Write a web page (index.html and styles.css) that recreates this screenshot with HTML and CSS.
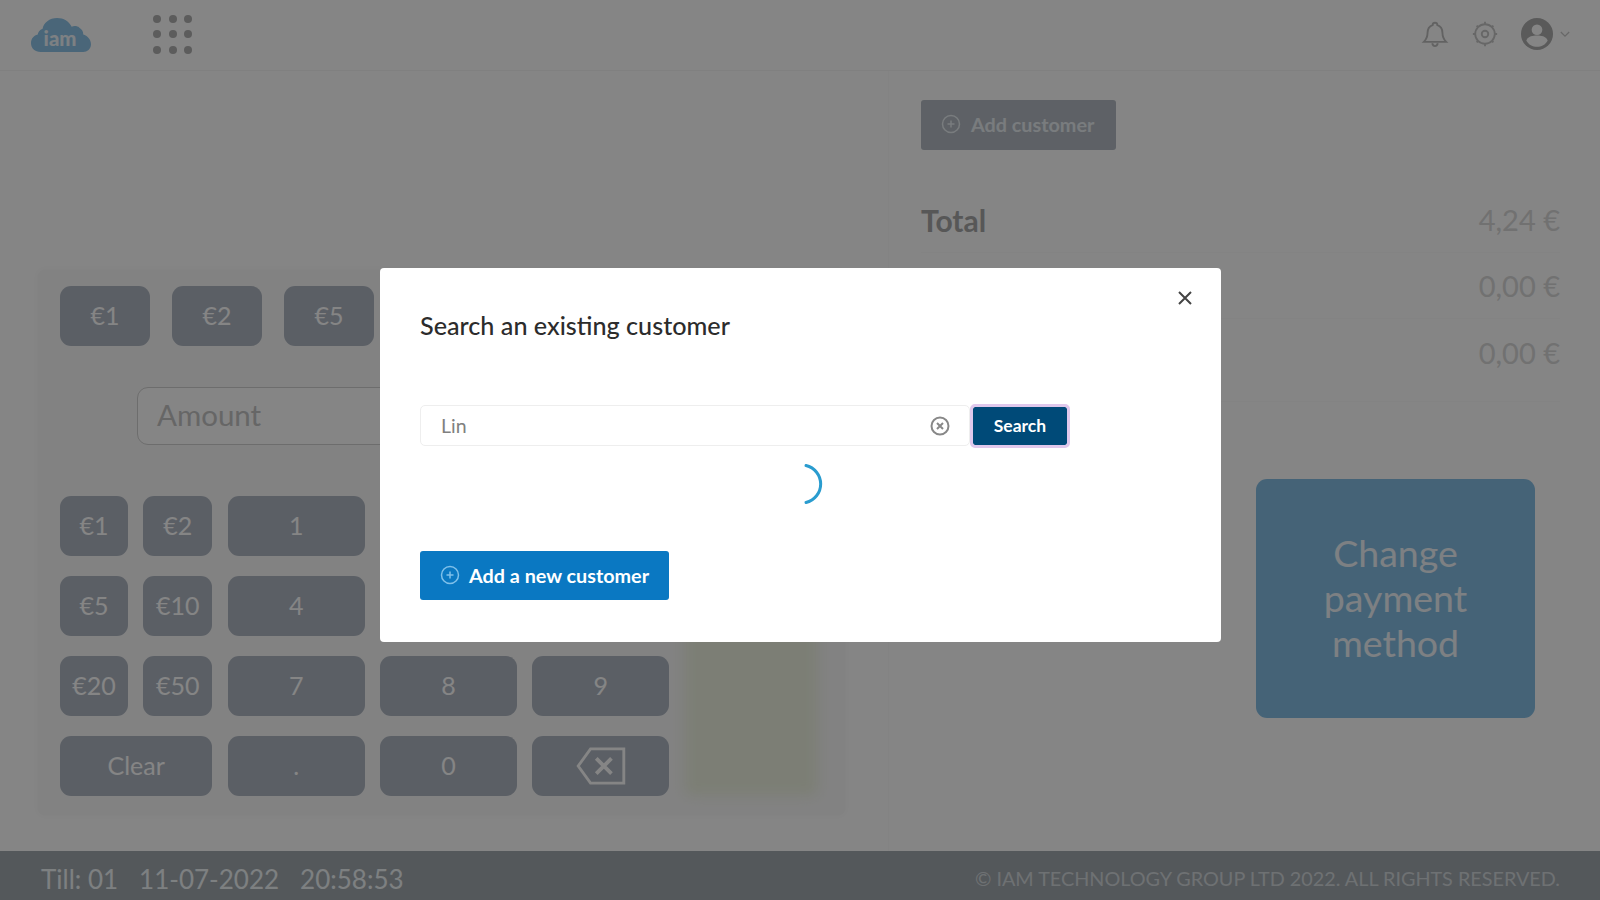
FILE: index.html
```html
<!DOCTYPE html>
<html lang="en">
<head>
  <meta charset="UTF-8">
  <title>IAM Till</title>
  <link rel="stylesheet" href="styles.css">
</head>
<body>
  <header class="topbar">
    <div class="topbar-left">
      <svg class="logo" viewBox="0 0 62 38">
        <path d="M10 37C4 37 0 33 0 28c0-5 3-8 7-9 0-2 2-5 5-6 1-6 7-11 15-11 7 0 12 3 15 9 2-1 6-1 8 1 3 2 4 4 4 7 4 1 8 5 8 10 0 5-4 8-8 8z" fill="#8ec4e8"/>
        <text x="30" y="31" class="logo-text">iam</text>
      </svg>
      <div class="apps">
        <i></i><i></i><i></i><i></i><i></i><i></i><i></i><i></i><i></i>
      </div>
    </div>
    <div class="topbar-right">
      <svg class="top-icon" viewBox="0 0 30 30" fill="none" stroke="#bdbdbd" stroke-width="2">
        <path d="M15 3c-1.500 0-2.500 1-2.500 2.400C8.500 6.500 7 10 7 14c0 4-1 6.500-4 9.500h24c-3-3-4-5.500-4-9.500 0-4-1.500-7.500-5.500-8.600C17.500 4 16.500 3 15 3z"/>
        <path d="M12 25c.5 2 1.500 3 3 3s2.500-1 3-3"/>
      </svg>
      <svg class="top-icon" viewBox="0 0 30 30" fill="none" stroke="#c6c6c6" stroke-width="2">
        <circle cx="15" cy="15" r="10.500"/>
        <circle cx="15" cy="15" r="3.500"/>
        <path d="M15 2v2.500M15 25.500V28M2 15h2.500M25.500 15H28M6 6l1.800 1.800M22.200 22.200 24 24M24 6l-1.800 1.800M7.800 22.200 6 24"/>
      </svg>
      <svg class="avatar" viewBox="0 0 30 30">
        <circle cx="15" cy="15" r="15" fill="#adadad"/>
        <circle cx="15" cy="11" r="5" fill="#fff"/>
        <path d="M5 21c2-4 6-4.500 10-4.500s8 .5 10 4.500c-2 4-6 6-10 6s-8-2-10-6z" fill="#fff"/>
      </svg>
      <svg class="chevron" viewBox="0 0 12 8" fill="none" stroke="#c6c6c6" stroke-width="1.500">
        <path d="M1 1l5 5 5-5"/>
      </svg>
    </div>
  </header>

  <main class="content">
    <section class="till-panel">
      <div class="quick-row">
        <button class="key quick">€1</button>
        <button class="key quick">€2</button>
        <button class="key quick">€5</button>
      </div>
      <div class="amount">Amount</div>
      <div class="pad-wrap">
        <div class="keypad">
          <button class="key">€1</button>
          <button class="key">€2</button>
          <button class="key">1</button>
          <button class="key"></button>
          <button class="key"></button>
          <button class="key">€5</button>
          <button class="key">€10</button>
          <button class="key">4</button>
          <button class="key"></button>
          <button class="key"></button>
          <button class="key">€20</button>
          <button class="key">€50</button>
          <button class="key">7</button>
          <button class="key">8</button>
          <button class="key">9</button>
          <button class="key clear">Clear</button>
          <button class="key">.</button>
          <button class="key">0</button>
          <button class="key">
            <svg class="backspace" viewBox="0 0 52 40" fill="none" stroke="#fff" stroke-width="3">
              <path d="M50 2H15L2 20l13 18h35z"/>
              <path d="M21 12l16 16M37 12 21 28" stroke-width="4"/>
            </svg>
          </button>
        </div>
        <div class="pay-block"></div>
      </div>
    </section>

    <section class="summary">
      <button class="add-customer">
        <svg class="plus-icon" viewBox="0 0 20 20" fill="none" stroke="currentColor" stroke-width="1.500">
          <circle cx="10" cy="10" r="8.500"/>
          <path d="M10 6.500v7M6.500 10h7"/>
        </svg>
        Add customer
      </button>
      <div class="totals">
        <div class="total-row">
          <span class="total-label">Total</span>
          <span class="total-value">4,24 €</span>
        </div>
        <div class="total-row">
          <span class="total-label"></span>
          <span class="total-value">0,00 €</span>
        </div>
        <div class="total-row">
          <span class="total-label"></span>
          <span class="total-value">0,00 €</span>
        </div>
      </div>
      <button class="change-payment">Change payment method</button>
    </section>
  </main>

  <footer class="footer">
    <div class="till-info">
      <span>Till: 01</span>
      <span>11-07-2022</span>
      <span>20:58:53</span>
    </div>
    <div class="copyright">© IAM TECHNOLOGY GROUP LTD 2022. ALL RIGHTS RESERVED.</div>
  </footer>

  <div class="backdrop"></div>

  <div class="modal">
    <button class="modal-close">
      <svg viewBox="0 0 16 16" fill="none" stroke="#444" stroke-width="2">
        <path d="M2 2l12 12M14 2 2 14"/>
      </svg>
    </button>
    <h2 class="modal-title">Search an existing customer</h2>
    <div class="search-row">
      <div class="search-box">
        <span class="search-text">Lin</span>
        <svg class="clear-icon" viewBox="0 0 20 20" fill="none" stroke="#888" stroke-width="2">
          <circle cx="10" cy="10" r="8.500"/>
          <path d="M7 7l6 6M13 7l-6 6"/>
        </svg>
      </div>
      <button class="search-btn">Search</button>
    </div>
    <div class="spinner-row">
      <svg class="spinner" viewBox="0 0 44 44" fill="none" stroke="#2a9ccf" stroke-width="3">
        <path d="M18 3.500A19 19 0 0 1 18 40.500" stroke-linecap="round"/>
      </svg>
    </div>
    <button class="add-new">
      <svg class="plus-icon" viewBox="0 0 20 20" fill="none" stroke="#7fc0ea" stroke-width="1.500">
        <circle cx="10" cy="10" r="8.500"/>
        <path d="M10 6.500v7M6.500 10h7"/>
      </svg>
      Add a new customer
    </button>
  </div>
</body>
</html>
```

FILE: styles.css
```css
* {
  margin: 0;
  padding: 0;
  box-sizing: border-box;
}

body {
  width: 1600px;
  height: 900px;
  overflow: hidden;
  display: flex;
  flex-direction: column;
  font-family: Lato, "Open Sans", sans-serif;
  background: #fff;
}

button {
  font-family: inherit;
  border: none;
}

.topbar {
  height: 71px;
  flex-shrink: 0;
  display: flex;
  justify-content: space-between;
  align-items: center;
  padding: 0 30px 2px 31px;
  border-bottom: 1px solid #f6f6f6;
}

.topbar-left {
  display: flex;
  align-items: center;
  gap: 62px;
}

.logo {
  width: 60px;
  height: 37px;
}

.logo-text {
  font-size: 21px;
  font-weight: 900;
  fill: #f0f6fb;
  text-anchor: middle;
}

.apps {
  display: grid;
  grid-template-columns: repeat(3, 8px);
  gap: 7.500px;
}

.apps i {
  width: 8px;
  height: 8px;
  border-radius: 50%;
  background: #b0b0b0;
}

.topbar-right {
  display: flex;
  align-items: center;
}

.top-icon {
  width: 28px;
  height: 28px;
  margin-right: 22px;
}

.avatar {
  width: 32px;
  height: 32px;
}

.chevron {
  width: 10px;
  height: 7px;
  margin-left: 7px;
}

.content {
  flex: 1;
  display: flex;
}

.till-panel {
  width: 807px;
  height: 545px;
  margin: 199px 0 0 38px;
  padding: 16px 22px 19px;
  background: #fafafa;
  border-radius: 6px;
  box-shadow: 0 0 6px rgba(0, 0, 0, 0.03);
}

.quick-row {
  display: flex;
  gap: 22px;
}

.key {
  height: 60px;
  padding-bottom: 2px;
  background: #afb7c2;
  color: #fff;
  font-size: 25px;
  border-radius: 11px;
  display: flex;
  justify-content: center;
  align-items: center;
}

.quick {
  width: 90px;
}

.amount {
  width: 532px;
  height: 58px;
  margin: 41px 0 51px 77px;
  padding-left: 19px;
  line-height: 54px;
  font-size: 29.500px;
  color: #c4c4c4;
  background: #fff;
  border: 1px solid #d2d2d2;
  border-radius: 11px;
}

.pad-wrap {
  display: flex;
  gap: 15px;
}

.keypad {
  display: grid;
  grid-template-columns: 68px 69px 137px 137px 137px;
  grid-auto-rows: 60px;
  gap: 20px 15.330px;
}

.clear {
  grid-column: span 2;
}

.backspace {
  width: 50px;
  height: 38px;
  margin-top: 2px;
}

.pay-block {
  width: 134px;
  background: #edf2e0;
  border-radius: 6px;
  filter: blur(7px);
}

.summary {
  flex: 1;
  margin-left: 43px;
  padding: 29px 40px 0 32px;
  border-left: 1px solid #fcfcfc;
  display: flex;
  flex-direction: column;
}

.add-customer {
  width: 195px;
  height: 50px;
  padding-bottom: 2px;
  display: flex;
  align-items: center;
  gap: 10px;
  padding-left: 20px;
  font-size: 19.800px;
  font-weight: 700;
  color: #e8edf2;
  background: #b4bbc3;
  border-radius: 3px;
}

.plus-icon {
  width: 20px;
  height: 20px;
  flex-shrink: 0;
}

.totals {
  margin-top: 37px;
  padding-bottom: 16px;
  border-bottom: 1px solid #fcfcfc;
}

.total-row {
  height: 66px;
  display: flex;
  justify-content: space-between;
  align-items: center;
  font-size: 29px;
  border-bottom: 1px solid #fcfcfc;
}

.total-row:last-child {
  border-bottom: none;
}

.total-label {
  font-size: 30px;
  font-weight: 700;
  color: #a8a8a8;
}

.total-value {
  color: #d8d8d8;
}

.change-payment {
  width: 279px;
  height: 239px;
  margin: 77px 0 0 335px;
  padding: 0 50px 2px;
  font-size: 37.500px;
  line-height: 45px;
  color: #f0f6fb;
  background: #85bfe5;
  border-radius: 11px;
}

.footer {
  height: 49px;
  flex-shrink: 0;
  display: flex;
  justify-content: space-between;
  align-items: center;
  padding: 6px 40px 0 41px;
  background: #a2a9af;
}

.till-info {
  display: flex;
  gap: 21px;
  font-size: 26px;
  color: #f0f5f8;
}

.copyright {
  font-size: 19.800px;
  color: #d4d9dd;
  margin-top: -2px;
}

.backdrop {
  position: fixed;
  inset: 0;
  background: rgba(0, 0, 0, 0.48);
}

.modal {
  position: fixed;
  left: 380px;
  top: 268px;
  width: 841px;
  height: 374px;
  padding: 41px 40px 0;
  background: #fff;
  border-radius: 4px;
}

.modal-close {
  position: absolute;
  top: 22px;
  right: 28px;
  width: 16px;
  height: 16px;
  background: none;
}

.modal-title {
  font-size: 25.200px;
  line-height: 32px;
  font-weight: 500;
  color: #2c2c2c;
}

.search-row {
  display: flex;
  align-items: center;
  gap: 3px;
  margin-top: 64px;
}

.search-box {
  width: 550px;
  height: 41px;
  display: flex;
  justify-content: space-between;
  align-items: center;
  padding: 0 19px 0 20px;
  border: 1px solid #eee;
  border-radius: 5px;
}

.search-text {
  font-size: 19.500px;
  color: #808080;
}

.clear-icon {
  width: 20px;
  height: 20px;
}

.search-btn {
  width: 94px;
  height: 38px;
  font-size: 17.500px;
  font-weight: 700;
  color: #fff;
  background: #004a78;
  border-radius: 2px;
  outline: 3px solid #e0c8ec;
}

.spinner-row {
  height: 44px;
  margin-top: 16px;
  padding-left: 368px;
}

.spinner {
  width: 44px;
  height: 44px;
}

.add-new {
  width: 249px;
  height: 49px;
  margin-top: 45px;
  padding-bottom: 2px;
  display: flex;
  align-items: center;
  gap: 9px;
  padding-left: 20px;
  font-size: 19.800px;
  font-weight: 700;
  color: #fff;
  background: #0a78c2;
  border-radius: 3px;
}
```
